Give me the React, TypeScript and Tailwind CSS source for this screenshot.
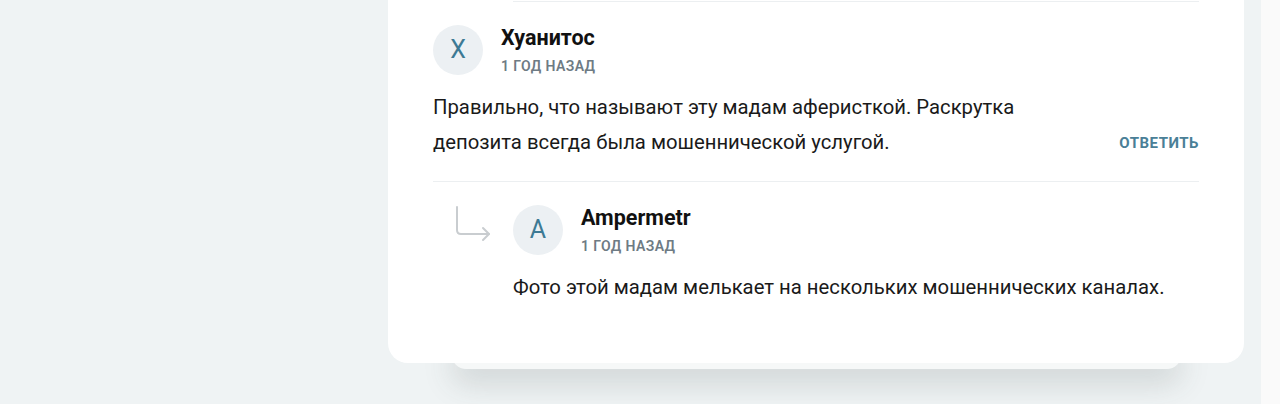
import React from 'react';

interface CommentProps {
  initial: string;
  name: string;
  time: string;
  text: string;
}

const Avatar: React.FC<{ initial: string }> = ({ initial }) => (
  <div className="flex h-[50px] w-[50px] shrink-0 items-center justify-center rounded-full bg-[#ecf0f3] text-[25px] text-[#3d7a94]">
    {initial}
  </div>
);

const CommentHeader: React.FC<Omit<CommentProps, 'text'>> = ({ initial, name, time }) => (
  <div className="flex items-center gap-[18px]">
    <Avatar initial={initial} />
    <div className="flex flex-col">
      <span className="text-[21.5px] font-bold leading-[24px] text-[#111]">{name}</span>
      <span className="mt-[8px] text-[14px] font-semibold uppercase leading-[16px] tracking-[0.4px] text-[#6e7b84]">
        {time}
      </span>
    </div>
  </div>
);

const ReplyArrow = () => (
  <svg width="38" height="36" viewBox="0 0 38 36" fill="none" className="shrink-0">
    <path d="M3 1 V24 Q3 28 7 28 H35" stroke="#c9cdd0" strokeWidth="2" strokeLinecap="round" />
    <path d="M29 22 L35 28 L29 34" stroke="#c9cdd0" strokeWidth="2" strokeLinecap="round" strokeLinejoin="round" />
  </svg>
);

export default function App() {
  return (
    <div
      className="flex h-[404px] w-[1280px] overflow-hidden bg-[#eff3f4]"
      style={{ fontFamily: 'Roboto, "Noto Sans", sans-serif' }}
    >
      <div className="w-[388px] shrink-0" />
      <div className="relative w-[856px] shrink-0 self-start">
        <div className="absolute bottom-[-6px] left-[64px] right-[63px] h-[30px] rounded-b-[14px] bg-[#f6f8f8] shadow-[0_14px_30px_rgba(60,70,70,0.18)]" />
        <div className="relative rounded-b-[20px] bg-white px-[45px] pb-[58px] pt-px">
          <div className="ml-[80px] h-px bg-[#eceff1]" />

          <div className="pt-[23px]">
            <CommentHeader initial="X" name="Хуанитос" time="1 год назад" />
            <div className="mt-[15px] flex items-end justify-between">
              <p className="w-[600px] text-[20.3px] leading-[35px] text-[#1a1a1a]">
                Правильно, что называют эту мадам аферисткой. Раскрутка депозита всегда была мошеннической услугой.
              </p>
              <button className="mb-[6px] text-[15px] font-bold uppercase tracking-[0.5px] text-[#4a7f97]">
                Ответить
              </button>
            </div>
          </div>

          <div className="mt-[21px] h-px bg-[#eceff1]" />

          <div className="flex pt-[23px]">
            <div className="w-[80px] shrink-0 pl-[21px] pt-[1px]">
              <ReplyArrow />
            </div>
            <div className="flex-1">
              <CommentHeader initial="A" name="Ampermetr" time="1 год назад" />
              <p className="mt-[15px] text-[20.3px] leading-[35px] text-[#1a1a1a]">
                Фото этой мадам мелькает на нескольких мошеннических каналах.
              </p>
            </div>
          </div>
        </div>
      </div>
      <div className="w-[17px] shrink-0" />
      <div className="h-full w-[19px] shrink-0 bg-[#fafafa]" />
    </div>
  );
}
